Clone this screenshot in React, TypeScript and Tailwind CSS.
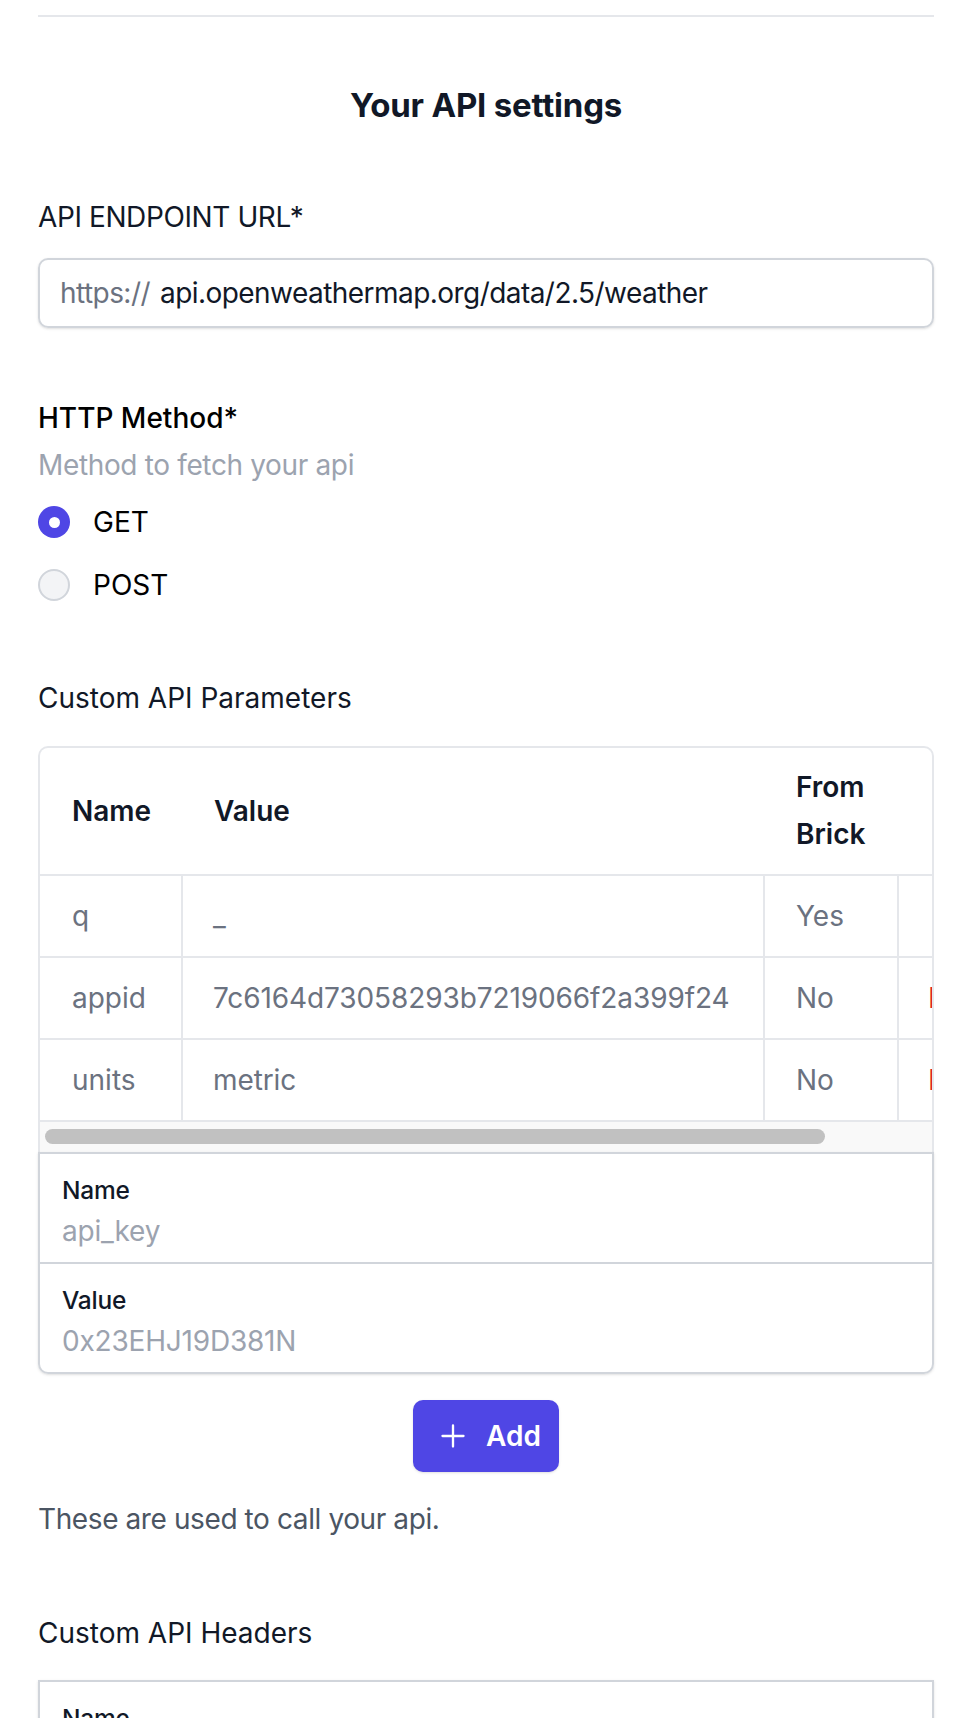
import React from 'react';

type Param = { name: string; value: string; fromBrick: string; removable: boolean };

const PARAMS: Param[] = [
  { name: 'q', value: '_', fromBrick: 'Yes', removable: false },
  { name: 'appid', value: '7c6164d73058293b7219066f2a399f24', fromBrick: 'No', removable: true },
  { name: 'units', value: 'metric', fromBrick: 'No', removable: true },
];

const COLS = 'grid grid-cols-[143px_582px_134px_164px] w-[1023px]';

function PlusIcon() {
  return (
    <svg width="28" height="28" viewBox="0 0 24 24" fill="none" stroke="currentColor" strokeWidth="2" strokeLinecap="round">
      <path d="M12 3v18M3 12h18" />
    </svg>
  );
}

function Radio({ label, checked }: { label: string; checked?: boolean }) {
  return (
    <div className="flex items-center h-[42px]">
      {checked ? (
        <span className="w-[32px] h-[32px] rounded-full bg-[#4f46e5] flex items-center justify-center">
          <span className="w-[11px] h-[11px] rounded-full bg-white" />
        </span>
      ) : (
        <span className="w-[32px] h-[32px] rounded-full bg-[#f3f4f6] border-2 border-[#d1d5db]" />
      )}
      <span className="ml-[23px] text-[28px] leading-[42px] text-black">{label}</span>
    </div>
  );
}

function FieldPair({ name, value, top }: { name: string; value: string; top?: boolean }) {
  return (
    <div className={`px-[22px] pt-[19px] pb-[10px] ${top ? '' : 'border-t-2 border-[#d1d5db]'}`}>
      <div className="text-[24.5px] leading-[35px] font-medium tracking-[-0.2px] text-[#111827]">{name}</div>
      <div className="mt-[2px] text-[28px] leading-[42px] tracking-[-0.2px] text-[#9ca3af]">{value}</div>
    </div>
  );
}

export default function App() {
  return (
    <div className="min-h-[1718px] bg-white font-['Inter',sans-serif]">
      <div className="ml-[38px] w-[896px]">
        <div className="pt-[15px]">
          <div className="h-[2px] bg-[#e5e7eb]" />
        </div>

        <h2 className="mt-[65px] text-center text-[33px] leading-[47px] font-bold tracking-[-0.2px] text-[#111827]">
          Your API settings
        </h2>

        {/* endpoint */}
        <div className="mt-[67px] text-[28px] leading-[42px] tracking-[-0.4px] text-[#111827]">API ENDPOINT URL*</div>
        <div className="mt-[20px] h-[70px] rounded-[10px] border-2 border-[#d1d5db] shadow-sm flex items-center pl-[20px] text-[28px] tracking-[-0.55px]">
          <span className="text-[#6b7280]">https://</span>
          <span className="ml-[10px] text-[#111827]">api.openweathermap.org/data/2.5/weather</span>
        </div>

        {/* method */}
        <div className="mt-[69px] text-[28px] leading-[42px] font-medium text-black">HTTP Method*</div>
        <div className="mt-[5px] text-[28px] leading-[42px] tracking-[-0.35px] text-[#9ca3af]">Method to fetch your api</div>
        <div className="mt-[15px] flex flex-col gap-[21px]">
          <Radio label="GET" checked />
          <Radio label="POST" />
        </div>

        {/* params */}
        <div className="mt-[71px] text-[28px] leading-[42px] text-[#111827]">Custom API Parameters</div>
        <div className="mt-[27px] rounded-t-[10px] border-2 border-b-0 border-[#e5e7eb] overflow-hidden">
          <div className={COLS}>
            {['Name', 'Value', 'From Brick', ''].map((h, i) => (
              <div
                key={i}
                className={`flex items-center ${i === 0 ? 'pl-[32px]' : 'pl-[31px]'} pr-[8px] py-[16px] h-[128px] border-b-2 border-[#e5e7eb] text-[28px] leading-[47px] font-semibold text-[#111827]`}
              >
                {h}
              </div>
            ))}
          </div>
          {PARAMS.map((p) => (
            <div key={p.name} className={COLS}>
              <div className="flex items-center pl-[32px] h-[82px] border-b-2 border-r-2 border-[#e5e7eb] text-[28px] text-[#6b7280]">{p.name}</div>
              <div className="flex items-center pl-[30px] h-[82px] border-b-2 border-r-2 border-[#e5e7eb] text-[28px] tracking-[-0.1px] text-[#6b7280]">{p.value}</div>
              <div className="flex items-center pl-[31px] h-[82px] border-b-2 border-r-2 border-[#e5e7eb] text-[28px] text-[#6b7280]">{p.fromBrick}</div>
              <div className="flex items-center pl-[29px] h-[82px] border-b-2 border-[#e5e7eb] text-[28px] text-[#dc2626]">
                {p.removable ? 'Delete' : ''}
              </div>
            </div>
          ))}
          <div className="h-[30px] bg-[#f9f9f9] pt-[7px] pl-[5px]">
            <div className="h-[15px] w-[780px] rounded-full bg-[#c1c1c1]" />
          </div>
        </div>
        <div className="rounded-b-[10px] border-2 border-[#d1d5db] shadow-sm">
          <FieldPair name="Name" value="api_key" top />
          <FieldPair name="Value" value="0x23EHJ19D381N" />
        </div>

        <button className="mt-[26px] mx-auto flex items-center h-[72px] w-[146px] pl-[26px] rounded-[10px] bg-[#4f46e5] text-white shadow-sm">
          <PlusIcon />
          <span className="ml-[19px] text-[28px] leading-[42px] font-semibold">Add</span>
        </button>

        <p className="mt-[26px] text-[28px] leading-[42px] tracking-[-0.4px] text-[#4b5563]">These are used to call your api.</p>

        {/* headers */}
        <div className="mt-[72px] text-[28px] leading-[42px] text-[#111827]">Custom API Headers</div>
        <div className="mt-[26px] border-2 border-[#d1d5db] rounded-b-[10px] shadow-sm">
          <FieldPair name="Name" value="api_key" top />
          <FieldPair name="Value" value="0x23EHJ19D381N" />
        </div>
        <div className="h-[60px]" />
      </div>
    </div>
  );
}
